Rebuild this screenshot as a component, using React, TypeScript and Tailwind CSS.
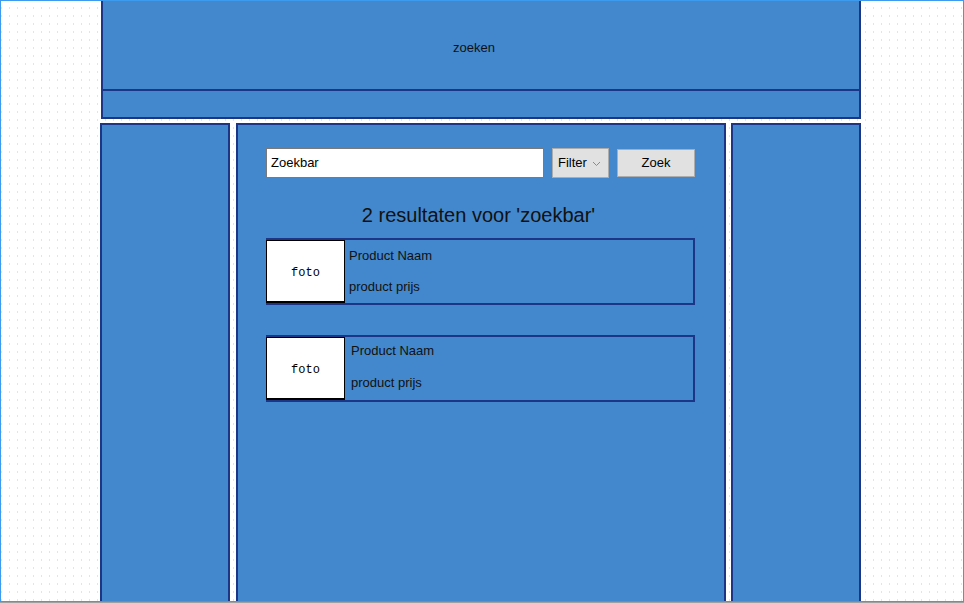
import React from "react";

const products = [
  { id: 1, nameTop: "mt-[8px]", nameLeft: "pl-[4px]", gap: "mt-[16px]" },
  { id: 2, nameTop: "mt-[6px]", nameLeft: "pl-[6px]", gap: "mt-[17px]" },
];

function Chevron() {
  return (
    <svg width="9" height="6" viewBox="0 0 9 6" className="ml-[5px] mt-[2px]">
      <path d="M1 1 L4.5 4.5 L8 1" fill="none" stroke="#8a8a8a" strokeWidth="1" />
    </svg>
  );
}

function ProductCard({ p }: { p: (typeof products)[number] }) {
  return (
    <div className="flex h-[67px] border-y-2 border-r-2 border-[#1c3587]">
      <div className="flex h-[63px] w-[79px] shrink-0 items-center justify-center border border-b-2 border-black bg-white pt-[4px] font-['Liberation_Mono',monospace] text-[12px] text-black">
        foto
      </div>
      <div className={`flex flex-col ${p.nameLeft} ${p.nameTop} text-[13px] leading-[15px] text-[#111]`}>
        <span>Product Naam</span>
        <span className={p.gap}>product prijs</span>
      </div>
    </div>
  );
}

export default function App() {
  return (
    <div className="h-[603px] w-[964px] bg-[#a0a0a0] font-['Liberation_Sans',Arial,sans-serif]">
      <div className="h-[602px] w-[964px] overflow-hidden border border-[#3d9bef] bg-white bg-[linear-gradient(to_right,transparent_1px,#fff_1px),linear-gradient(to_bottom,#e4e4e4_2px,#fff_2px)] bg-[size:8px_8px] bg-[position:0px_6px]">
        {/* header */}
        <div className="ml-[100px] h-[118px] w-[760px] border-x-2 border-b-2 border-[#1c3587] bg-[#4388cc]">
          <div className="flex h-[90px] items-center justify-center border-b-2 border-[#1c3587] pr-[14px] pt-[6px] text-[13px] text-[#111]">
            zoeken
          </div>
        </div>

        {/* columns */}
        <div className="mt-[4px] flex h-[480px]">
          <div className="ml-[99px] w-[130px] border-x-2 border-t-2 border-[#1c3587] bg-[#4388cc]" />

          <div className="ml-[6px] w-[490px] border-x-2 border-t-2 border-[#1c3587] bg-[#4388cc] pl-[28px] pr-[29px] pt-[23px]">
            <div className="flex items-start">
              <div className="flex h-[30px] w-[278px] items-center border border-[#7a7a7a] bg-white pl-[4px] text-[13px] text-black">
                Zoekbar
              </div>
              <div className="ml-[8px] flex h-[30px] w-[57px] items-center border border-[#adadad] bg-[#e1e1e1] pl-[5px] text-[13px] text-black">
                Filter
                <Chevron />
              </div>
              <button className="ml-[8px] mt-[1px] flex h-[28px] w-[78px] justify-center border border-[#adadad] bg-[#e1e1e1] pt-[5px] text-[13px] leading-[15px] text-black">
                Zoek
              </button>
            </div>

            <h1 className="mt-[25px] pr-[4px] text-center text-[20px] leading-[24px] text-[#111]">
              2 resultaten voor 'zoekbar'
            </h1>

            <div className="mt-[11px] flex flex-col gap-[30px]">
              {products.map((p) => (
                <ProductCard key={p.id} p={p} />
              ))}
            </div>
          </div>

          <div className="ml-[5px] w-[130px] border-x-2 border-t-2 border-[#1c3587] bg-[#4388cc]" />
        </div>
      </div>
    </div>
  );
}
